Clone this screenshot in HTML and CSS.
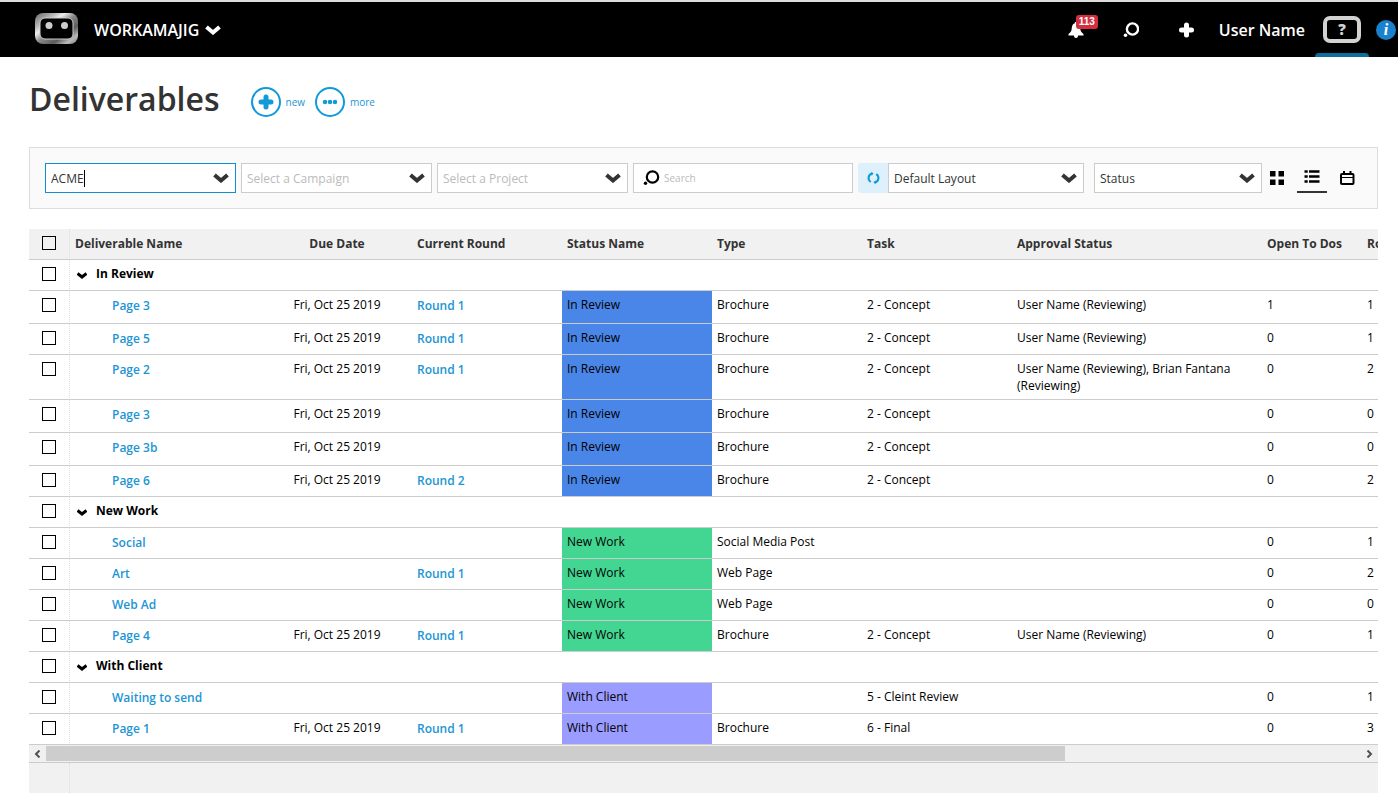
FILE: index.html
```html
<!DOCTYPE html>
<html lang="en">

<head>
    <meta charset="UTF-8">
    <meta name="viewport" content="width=device-width, initial-scale=1.0">
    <title>Deliverables</title>
    <link rel="stylesheet" href="styles.css">
</head>

<body>

    <header class="topbar">
        <a href="#" class="logo" aria-label="Home">
            <svg width="44" height="32" viewBox="0 0 44 32">
                <defs>
                    <linearGradient id="metal" x1="0" y1="0" x2="1" y2="1">
                        <stop offset="0" stop-color="#666" />
                        <stop offset="0.25" stop-color="#bbb" />
                        <stop offset="0.35" stop-color="#eee" />
                        <stop offset="0.5" stop-color="#888" />
                        <stop offset="0.7" stop-color="#5c5c60" />
                        <stop offset="0.85" stop-color="#bbb" />
                        <stop offset="1" stop-color="#777" />
                    </linearGradient>
                </defs>
                <rect x="0" y="0" width="43" height="31" rx="8" fill="url(#metal)" />
                <rect x="5" y="5" width="33" height="21" rx="5" fill="#000" stroke="#ccc" />
                <circle cx="14" cy="12.5" r="3.5" fill="#ccc" />
                <circle cx="29.5" cy="12.5" r="3.5" fill="#ccc" />
            </svg>
        </a>
        <button class="company">WORKAMAJIG
            <svg width="16" height="10" viewBox="0 0 16 10"><path d="M1.5 2L8 7.500 14.5 2" fill="none" stroke="#fff" stroke-width="4" /></svg>
        </button>
        <nav class="topnav">
            <button class="nav-icon bell" aria-label="Notifications">
                <svg width="16" height="16" viewBox="0 0 16 16"><path d="M8 0c1 0 1.3.6 1.4 1.4C12 2.2 12 4.5 12.3 7c.3 2.5 1.6 3.6 3.2 5v1.500h-5.4C10 15.200 9.200 16 8 16s-2-.8-2.100-2.500H.5V12c1.600-1.400 2.900-2.500 3.200-5C4 4.500 4 2.200 6.600 1.400 6.700.6 7 0 8 0z" fill="#fff" /></svg>
                <span class="badge">113</span>
            </button>
            <button class="nav-icon" aria-label="Search">
                <svg width="16" height="16" viewBox="0 0 16 16"><circle cx="9.500" cy="7" r="5.600" fill="none" stroke="#fff" stroke-width="2.400" /><circle cx="2.500" cy="13.300" r="1.800" fill="#fff" /></svg>
            </button>
            <button class="nav-icon" aria-label="Add">
                <svg width="16" height="16" viewBox="0 0 16 16"><path d="M8.500 3v10M3.500 8h10" stroke="#fff" stroke-width="5" stroke-linecap="round" /></svg>
            </button>
            <a href="#" class="user">User Name</a>
            <button class="help" aria-label="Help"><span>?</span></button>
            <button class="info" aria-label="Info">i</button>
        </nav>
    </header>

    <main class="page">
        <div class="page-title">
            <h1>Deliverables</h1>
            <button class="action">
                <svg width="30" height="30" viewBox="0 0 30 30"><circle cx="15" cy="15" r="14" /><path d="M15 10v10M10 15h10" stroke-width="5" stroke-linecap="round" /></svg>
                new
            </button>
            <button class="action">
                <svg width="30" height="30" viewBox="0 0 30 30"><circle cx="15" cy="15" r="14" /><path d="M10 15h0M15 15h0M20 15h0" stroke-width="4.500" stroke-linecap="round" /></svg>
                more
            </button>
        </div>

        <form class="filters">
            <label class="combo">
                <input type="text" value="ACME" aria-label="Client">
                <span class="cursor"></span>
            </label>
            <select class="dropdown empty" aria-label="Campaign"><option>Select a Campaign</option></select>
            <select class="dropdown empty" aria-label="Project"><option>Select a Project</option></select>
            <label class="search">
                <svg width="17" height="16" viewBox="0 0 17 16"><circle cx="9.500" cy="7" r="5.700" fill="none" stroke="#000" stroke-width="2.200" /><circle cx="2.500" cy="13.300" r="1.700" /></svg>
                <input type="text" placeholder="Search" aria-label="Search">
            </label>
            <div class="layout-group">
                <button type="button" class="refresh" aria-label="Refresh">
                    <svg width="14" height="14" viewBox="0 0 14 14"><path d="M6.200 2.600A4.500 4.500 0 0 0 4.800 10.900M8.800 11.400A4.500 4.500 0 0 0 10.200 3.100" fill="none" stroke="#0f9ad8" stroke-width="2" /><path d="M5.500.800v4l2-2.200zM9.500 13.200v-4l-2 2.200z" fill="#0f9ad8" /></svg>
                </button>
                <select class="dropdown" aria-label="Layout"><option>Default Layout</option></select>
            </div>
            <div class="view-group">
                <select class="dropdown" aria-label="Group by"><option>Status</option></select>
                <button type="button" class="view" aria-label="Grid view">
                    <svg width="16" height="16" viewBox="0 0 16 16" fill="#444" stroke="#000" stroke-width="2.500"><rect x="2.250" y="2.250" width="3" height="3" /><rect x="10.750" y="2.250" width="3" height="3" /><rect x="2.250" y="10.750" width="3" height="3" /><rect x="10.750" y="10.750" width="3" height="3" /></svg>
                </button>
                <button type="button" class="view active" aria-label="List view">
                    <svg width="16" height="16" viewBox="0 0 16 16" stroke="#000" stroke-width="2.500"><path d="M.5 2.500h3.200M5 2.500h10.500M.5 7.500h3.200M5 7.500h10.500M.5 12.500h3.200M5 12.500h10.500" /></svg>
                </button>
                <button type="button" class="view" aria-label="Calendar view">
                    <svg width="16" height="16" viewBox="0 0 16 16" fill="none" stroke="#000" stroke-width="2"><rect x="2" y="4" width="12.500" height="10" rx="1" /><path d="M2 7.500h12" stroke-width="1" /><path d="M5 1v4M11.500 1v4" /></svg>
                </button>
            </div>
        </form>

        <section class="grid">
            <table>
                <colgroup>
                    <col class="col-check">
                    <col class="col-name">
                    <col class="col-std">
                    <col class="col-std">
                    <col class="col-std">
                    <col class="col-std">
                    <col class="col-std">
                    <col class="col-approval">
                    <col class="col-todos">
                    <col>
                </colgroup>
                <thead>
                    <tr>
                        <th class="check"><input type="checkbox" aria-label="Select all"></th>
                        <th>Deliverable Name</th>
                        <th class="date">Due Date</th>
                        <th>Current Round</th>
                        <th>Status Name</th>
                        <th>Type</th>
                        <th>Task</th>
                        <th>Approval Status</th>
                        <th>Open To Dos</th>
                        <th>Rounds</th>
                    </tr>
                </thead>
                <tbody>
                    <tr class="group">
                        <td class="check"><input type="checkbox" aria-label="Select In Review"></td>
                        <td colspan="9"><button class="toggle"><svg width="10" height="7" viewBox="0 0 10 7"><path d="M.5 1.500L5 5l4.500-3.500" /></svg>In Review</button></td>
                    </tr>
                    <tr class="tall">
                        <td class="check"><input type="checkbox" aria-label="Select Page 3"></td>
                        <td class="name"><a href="#">Page 3</a></td>
                        <td class="date">Fri, Oct 25 2019</td>
                        <td><a href="#">Round 1</a></td>
                        <td class="review">In Review</td>
                        <td>Brochure</td>
                        <td>2 - Concept</td>
                        <td>User Name (Reviewing)</td>
                        <td>1</td>
                        <td>1</td>
                    </tr>
                    <tr>
                        <td class="check"><input type="checkbox" aria-label="Select Page 5"></td>
                        <td class="name"><a href="#">Page 5</a></td>
                        <td class="date">Fri, Oct 25 2019</td>
                        <td><a href="#">Round 1</a></td>
                        <td class="review">In Review</td>
                        <td>Brochure</td>
                        <td>2 - Concept</td>
                        <td>User Name (Reviewing)</td>
                        <td>0</td>
                        <td>1</td>
                    </tr>
                    <tr>
                        <td class="check"><input type="checkbox" aria-label="Select Page 2"></td>
                        <td class="name"><a href="#">Page 2</a></td>
                        <td class="date">Fri, Oct 25 2019</td>
                        <td><a href="#">Round 1</a></td>
                        <td class="review">In Review</td>
                        <td>Brochure</td>
                        <td>2 - Concept</td>
                        <td>User Name (Reviewing), Brian Fantana (Reviewing)</td>
                        <td>0</td>
                        <td>2</td>
                    </tr>
                    <tr class="tall">
                        <td class="check"><input type="checkbox" aria-label="Select Page 3"></td>
                        <td class="name"><a href="#">Page 3</a></td>
                        <td class="date">Fri, Oct 25 2019</td>
                        <td></td>
                        <td class="review">In Review</td>
                        <td>Brochure</td>
                        <td>2 - Concept</td>
                        <td></td>
                        <td>0</td>
                        <td>0</td>
                    </tr>
                    <tr class="tall">
                        <td class="check"><input type="checkbox" aria-label="Select Page 3b"></td>
                        <td class="name"><a href="#">Page 3b</a></td>
                        <td class="date">Fri, Oct 25 2019</td>
                        <td></td>
                        <td class="review">In Review</td>
                        <td>Brochure</td>
                        <td>2 - Concept</td>
                        <td></td>
                        <td>0</td>
                        <td>0</td>
                    </tr>
                    <tr>
                        <td class="check"><input type="checkbox" aria-label="Select Page 6"></td>
                        <td class="name"><a href="#">Page 6</a></td>
                        <td class="date">Fri, Oct 25 2019</td>
                        <td><a href="#">Round 2</a></td>
                        <td class="review">In Review</td>
                        <td>Brochure</td>
                        <td>2 - Concept</td>
                        <td></td>
                        <td>0</td>
                        <td>2</td>
                    </tr>
                </tbody>
                <tbody>
                    <tr class="group">
                        <td class="check"><input type="checkbox" aria-label="Select New Work"></td>
                        <td colspan="9"><button class="toggle"><svg width="10" height="7" viewBox="0 0 10 7"><path d="M.5 1.500L5 5l4.500-3.500" /></svg>New Work</button></td>
                    </tr>
                    <tr>
                        <td class="check"><input type="checkbox" aria-label="Select Social"></td>
                        <td class="name"><a href="#">Social</a></td>
                        <td></td>
                        <td></td>
                        <td class="new">New Work</td>
                        <td>Social Media Post</td>
                        <td></td>
                        <td></td>
                        <td>0</td>
                        <td>1</td>
                    </tr>
                    <tr>
                        <td class="check"><input type="checkbox" aria-label="Select Art"></td>
                        <td class="name"><a href="#">Art</a></td>
                        <td></td>
                        <td><a href="#">Round 1</a></td>
                        <td class="new">New Work</td>
                        <td>Web Page</td>
                        <td></td>
                        <td></td>
                        <td>0</td>
                        <td>2</td>
                    </tr>
                    <tr>
                        <td class="check"><input type="checkbox" aria-label="Select Web Ad"></td>
                        <td class="name"><a href="#">Web Ad</a></td>
                        <td></td>
                        <td></td>
                        <td class="new">New Work</td>
                        <td>Web Page</td>
                        <td></td>
                        <td></td>
                        <td>0</td>
                        <td>0</td>
                    </tr>
                    <tr>
                        <td class="check"><input type="checkbox" aria-label="Select Page 4"></td>
                        <td class="name"><a href="#">Page 4</a></td>
                        <td class="date">Fri, Oct 25 2019</td>
                        <td><a href="#">Round 1</a></td>
                        <td class="new">New Work</td>
                        <td>Brochure</td>
                        <td>2 - Concept</td>
                        <td>User Name (Reviewing)</td>
                        <td>0</td>
                        <td>1</td>
                    </tr>
                </tbody>
                <tbody>
                    <tr class="group">
                        <td class="check"><input type="checkbox" aria-label="Select With Client"></td>
                        <td colspan="9"><button class="toggle"><svg width="10" height="7" viewBox="0 0 10 7"><path d="M.5 1.500L5 5l4.500-3.500" /></svg>With Client</button></td>
                    </tr>
                    <tr>
                        <td class="check"><input type="checkbox" aria-label="Select Waiting to send"></td>
                        <td class="name"><a href="#">Waiting to send</a></td>
                        <td></td>
                        <td></td>
                        <td class="client">With Client</td>
                        <td></td>
                        <td>5 - Cleint Review</td>
                        <td></td>
                        <td>0</td>
                        <td>1</td>
                    </tr>
                    <tr>
                        <td class="check"><input type="checkbox" aria-label="Select Page 1"></td>
                        <td class="name"><a href="#">Page 1</a></td>
                        <td class="date">Fri, Oct 25 2019</td>
                        <td><a href="#">Round 1</a></td>
                        <td class="client">With Client</td>
                        <td>Brochure</td>
                        <td>6 - Final</td>
                        <td></td>
                        <td>0</td>
                        <td>3</td>
                    </tr>
                </tbody>
            </table>
        </section>
        <div class="scrollbar">
            <button aria-label="Scroll left"><svg width="7" height="8" viewBox="0 0 7 8"><path d="M5.500.500L2 4l3.500 3.500" /></svg></button>
            <div class="track"><div class="thumb"></div></div>
            <button aria-label="Scroll right"><svg width="7" height="8" viewBox="0 0 7 8"><path d="M1.500.500L5 4 1.500 7.500" /></svg></button>
        </div>
        <div class="grid-footer"><div class="footer-check"></div></div>
    </main>

</body>

</html>
```
FILE: styles.css
```css
* {
    box-sizing: border-box;
}

body {
    font-family: "Open Sans", sans-serif;
    font-size: 12px;
    margin: 0;
    color: #000;
    background: #fff;
    overflow-x: hidden;
}

button {
    font-family: inherit;
    border: 0;
    padding: 0;
    background: none;
    cursor: pointer;
}

a {
    color: #1b95d4;
    font-weight: 600;
    text-decoration: none;
}

svg {
    display: block;
    flex: none;
}

/* Top bar */
.topbar {
    display: flex;
    align-items: center;
    height: 57px;
    padding: 0 2px 0 35px;
    background: #000;
    border-top: 2px solid #dadcde;
}

.logo {
    padding-bottom: 2px;
}

.company {
    display: flex;
    align-items: center;
    gap: 6px;
    margin-left: 15px;
    color: #fff;
    font-size: 16px;
    font-weight: 600;
}

.topnav {
    display: flex;
    align-items: center;
    align-self: stretch;
    margin-left: auto;
}

.nav-icon {
    position: relative;
    width: 55px;
    display: flex;
    justify-content: center;
}

.badge {
    position: absolute;
    top: -7px;
    left: 27px;
    padding: 0 3px;
    border-radius: 3px;
    background: #d2303f;
    color: #fff;
    font-family: "Liberation Sans", Arial, sans-serif;
    font-size: 10px;
    font-weight: 700;
    line-height: 14px;
}

.user {
    margin: 0 10px 0 5px;
    color: #fff;
    font-size: 16px;
}

.help {
    display: flex;
    align-items: center;
    justify-content: center;
    align-self: stretch;
    position: relative;
    width: 54px;
}

.help::after {
    content: "";
    position: absolute;
    left: 0;
    right: 0;
    bottom: 0;
    height: 4px;
    border-radius: 4px 4px 0 0;
    background: #0a6f9e;
}

.help span {
    width: 38px;
    height: 27px;
    border: 4px solid #d2d2d2;
    border-radius: 7px;
    color: #d2d2d2;
    font-size: 15px;
    font-weight: 800;
    line-height: 19px;
}

.info {
    width: 20px;
    height: 20px;
    margin-left: 7px;
    border-radius: 50%;
    background: #1a82cc;
    color: #fff;
    font-family: "Liberation Serif", serif;
    font-size: 16px;
    font-style: italic;
    font-weight: bold;
    line-height: 20px;
}

/* Title and actions */
.page {
    padding: 18px 20px 13px 29px;
}

.page-title {
    display: flex;
    align-items: center;
    height: 54px;
    gap: 10px;
    margin-bottom: 18px;
}

.page-title h1 {
    margin: 0 21px 6px 0;
    color: #333;
    font-size: 32px;
    font-weight: 600;
    line-height: 48px;
}

.action {
    display: flex;
    align-items: center;
    gap: 5px;
    color: #1b95d4;
    font-size: 10px;
}

.action svg {
    fill: none;
    stroke: #0f9ad8;
    stroke-width: 2;
}

/* Filters */
.filters {
    display: flex;
    gap: 5px;
    padding: 15px;
    margin-bottom: 20px;
    background: #fafafa;
    border: 1px solid #ddd;
}

.combo,
.dropdown {
    width: 191px;
    height: 30px;
    padding: 0 30px 0 5px;
    border: 1px solid #ccc;
    border-radius: 0;
    color: #333;
    font-family: inherit;
    font-size: 12px;
    background: #fff url("data:image/svg+xml,%3Csvg xmlns='http://www.w3.org/2000/svg' width='16' height='10'%3E%3Cpath d='M1.5 2L8 7.500 14.5 2' fill='none' stroke='%23333' stroke-width='4'/%3E%3C/svg%3E") no-repeat right 6px center;
    appearance: none;
}

.combo {
    display: flex;
    align-items: center;
    border-color: #0f8fd0;
}

.combo input,
.search input {
    border: 0;
    padding: 0;
    outline: 0;
    background: none;
    color: #333;
    font-family: inherit;
    font-size: 12px;
}

.combo input {
    field-sizing: content;
}

.cursor {
    width: 1px;
    height: 17px;
    background: #000;
}

.empty {
    color: #bbb;
}

.search {
    display: flex;
    align-items: center;
    gap: 4px;
    flex: 1;
    min-width: 120px;
    padding: 0 9px;
    border: 1px solid #ccc;
    background: #fff;
}

.search input {
    flex: 1;
    min-width: 0;
    font-size: 10px;
}

.search input::placeholder {
    color: #bbb;
}

.layout-group,
.view-group {
    display: flex;
}

.layout-group .dropdown {
    width: 196px;
}

.view-group {
    margin-left: 5px;
}

.view-group .dropdown {
    width: 168px;
}

.refresh {
    display: flex;
    align-items: center;
    justify-content: center;
    width: 30px;
    border-radius: 3px 0 0 3px;
    background: #def0fb;
}

.view {
    display: flex;
    align-items: center;
    justify-content: center;
    width: 30px;
}

.view + .view {
    margin-left: 5px;
}

.active {
    border-bottom: 2px solid #333;
}

/* Table */
.grid {
    overflow: hidden;
}

table {
    width: 1742px;
    table-layout: fixed;
    border-collapse: separate;
    border-spacing: 0;
}

.col-check {
    width: 41px;
}

.col-name {
    width: 192px;
}

.col-std {
    width: 150px;
}

.col-approval {
    width: 250px;
}

.col-todos {
    width: 100px;
}

th,
td {
    height: 31px;
    padding: 5px;
    border-bottom: 1px solid #ccc;
    line-height: 17px;
    text-align: left;
    vertical-align: top;
}

th {
    padding-top: 6px;
    background: #f1f1f1;
    color: #333;
    font-weight: 700;
}

.tall td {
    height: 33px;
}

td a {
    display: block;
    padding-top: 1px;
    line-height: 17px;
    margin-bottom: -1px;
}

.check {
    padding: 7px 0 0 13px;
    border-right: 1px dotted #ddd;
}

.check input {
    display: block;
    width: 14px;
    height: 14px;
    margin: 0;
    border: 1px solid #000;
    appearance: none;
}

.check input:checked {
    background: #333;
}

.name {
    padding-left: 42px;
}

.date {
    text-align: center;
}

.toggle {
    display: flex;
    align-items: center;
    gap: 9px;
    padding: 0 2px;
    font-size: 12px;
    font-weight: 700;
    line-height: 17px;
}

.toggle svg {
    margin-top: 3px;
    fill: none;
    stroke: #000;
    stroke-width: 3;
}

.review {
    background: #4a86e8;
}

.new {
    background: #43d692;
}

.client {
    background: #9a9cff;
}

/* Scrollbar and footer */
.scrollbar {
    display: flex;
    height: 18px;
    padding: 1px 0;
    background: #f0f0f0;
    border-bottom: 1px solid #ccc;
}

.scrollbar button {
    display: flex;
    align-items: center;
    justify-content: center;
    width: 17px;
}

.scrollbar path {
    fill: none;
    stroke: #505050;
    stroke-width: 2;
}

.track {
    flex: 1;
}

.thumb {
    width: 77.5%;
    height: 100%;
    background: #cdcdcd;
}

.grid-footer {
    height: 30px;
    background: #f1f1f1;
}

.footer-check {
    width: 41px;
    height: 100%;
    border-right: 1px dotted #ddd;
}
```
